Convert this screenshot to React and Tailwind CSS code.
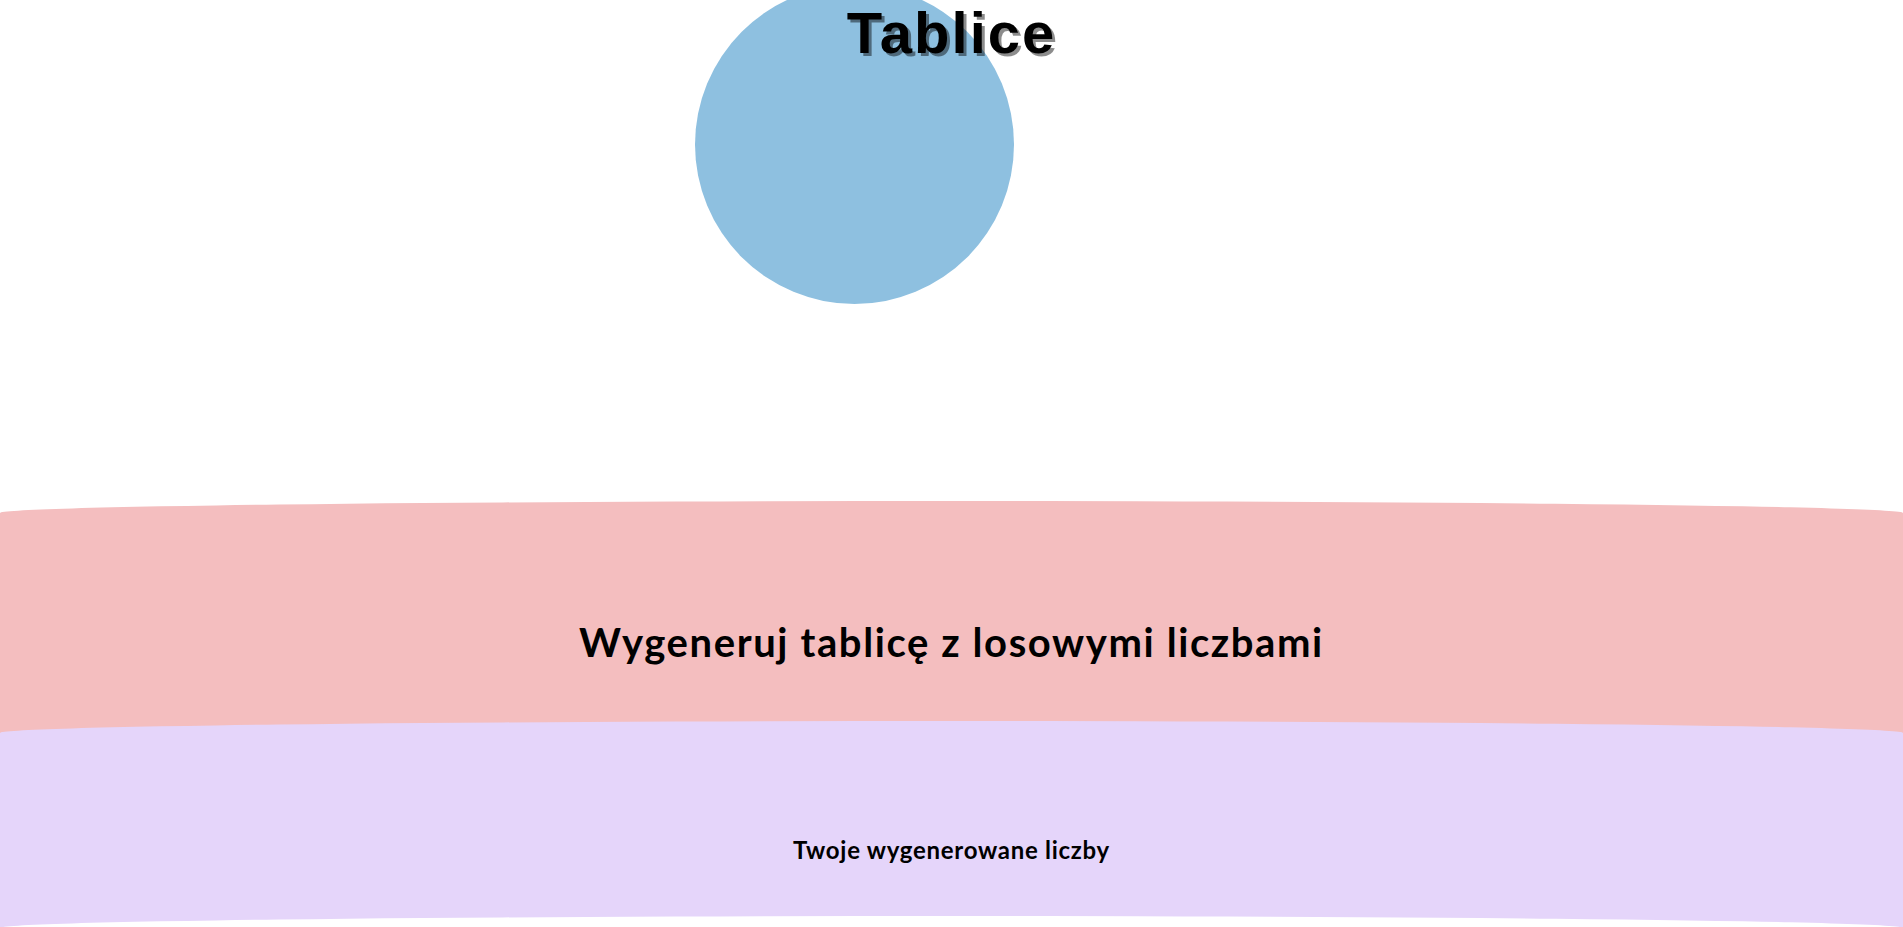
import React from 'react';

export default function App() {
  return (
    <div className="h-screen overflow-hidden bg-white font-['Lato','Noto_Sans',sans-serif] text-black">
      <header className="relative h-[501px]">
        <div className="absolute left-[695px] top-[-15px] h-[319px] w-[319px] rounded-full bg-[#8ec0e0]" />
        <h1 className="relative text-center font-['Liberation_Sans',Arial,sans-serif] text-[58px] font-bold leading-[66px] tracking-[2px] [text-shadow:3px_3px_0_rgba(0,0,0,0.45)]">
          Tablice
        </h1>
      </header>

      <section className="flex h-[250px] justify-center rounded-[50%/12px] bg-[#f4bebf] pt-[116px]">
        <h2 className="text-[40px] font-bold leading-[50px] tracking-[0.04em]">
          Wygeneruj tablicę z losowymi liczbami
        </h2>
      </section>

      <section className="relative mt-[-30px] flex h-[240px] justify-center rounded-[50%/12px] bg-[#e5d5fa] pt-[114px]">
        <h3 className="text-[24px] font-bold leading-[30px] tracking-[0.03em]">
          Twoje wygenerowane liczby
        </h3>
      </section>

      <section className="relative mt-[-45px] h-[120px] rounded-[50%/12px] bg-white" />
    </div>
  );
}
